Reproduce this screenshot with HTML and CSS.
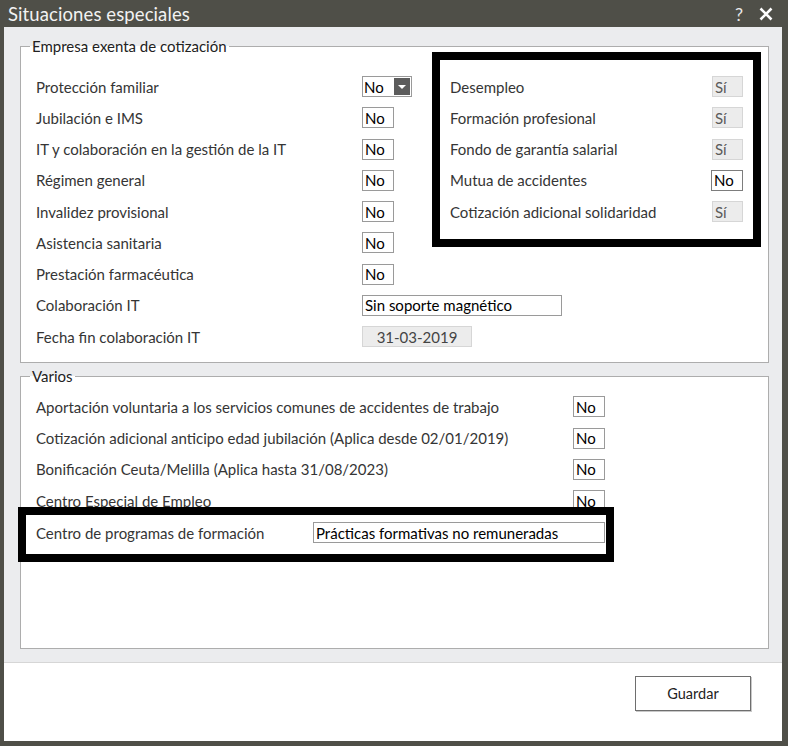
FILE: index.html
```html
<!DOCTYPE html>
<html lang="es">
<head>
  <meta charset="UTF-8" />
  <title>Situaciones especiales</title>
  <link rel="stylesheet" href="styles.css">
</head>
<body>
  <div class="window">
    <div class="titlebar">
      <span class="title">Situaciones especiales</span>
      <div class="title-buttons">
        <span class="help">?</span>
        <svg class="close" width="14" height="14" viewBox="0 0 14 14">
          <path d="M1.5 1.5L12.5 12.5M12.5 1.5L1.5 12.5" stroke="#fff" stroke-width="2.6" />
        </svg>
      </div>
    </div>

    <div class="dialog">
      <div class="panel">
        <fieldset class="group group-exenta">
          <legend>Empresa exenta de cotización</legend>
          <div class="cols">
            <div class="col-left">
              <div class="row">
                <label>Protección familiar</label>
                <div class="combo">
                  <span class="combo-value">No</span>
                  <span class="combo-arrow"></span>
                </div>
              </div>
              <div class="row"><label>Jubilación e IMS</label><input class="box" value="No" readonly /></div>
              <div class="row"><label>IT y colaboración en la gestión de la IT</label><input class="box" value="No" readonly /></div>
              <div class="row"><label>Régimen general</label><input class="box" value="No" readonly /></div>
              <div class="row"><label>Invalidez provisional</label><input class="box" value="No" readonly /></div>
              <div class="row"><label>Asistencia sanitaria</label><input class="box" value="No" readonly /></div>
              <div class="row"><label>Prestación farmacéutica</label><input class="box" value="No" readonly /></div>
              <div class="row"><label>Colaboración IT</label><input class="box wide" value="Sin soporte magnético" readonly /></div>
              <div class="row"><label>Fecha fin colaboración IT</label><input class="box date disabled" value="31-03-2019" readonly /></div>
            </div>

            <div class="col-right marked">
              <div class="row"><label>Desempleo</label><input class="box disabled" value="Sí" readonly /></div>
              <div class="row"><label>Formación profesional</label><input class="box disabled" value="Sí" readonly /></div>
              <div class="row"><label>Fondo de garantía salarial</label><input class="box disabled" value="Sí" readonly /></div>
              <div class="row"><label>Mutua de accidentes</label><input class="box dark" value="No" readonly /></div>
              <div class="row"><label>Cotización adicional solidaridad</label><input class="box disabled" value="Sí" readonly /></div>
            </div>
          </div>
        </fieldset>

        <fieldset class="group group-varios">
          <legend>Varios</legend>
          <div class="row"><label>Aportación voluntaria a los servicios comunes de accidentes de trabajo</label><input class="box" value="No" readonly /></div>
          <div class="row"><label>Cotización adicional anticipo edad jubilación (Aplica desde 02/01/2019)</label><input class="box" value="No" readonly /></div>
          <div class="row"><label>Bonificación Ceuta/Melilla (Aplica hasta 31/08/2023)</label><input class="box" value="No" readonly /></div>
          <div class="row"><label>Centro Especial de Empleo</label><input class="box" value="No" readonly /></div>
          <div class="row marked marked-row">
            <label>Centro de programas de formación</label>
            <input class="box long" value="Prácticas formativas no remuneradas" readonly />
          </div>
        </fieldset>
      </div>

      <div class="footer">
        <button class="btn">Guardar</button>
      </div>
    </div>
  </div>
</body>
</html>
```

FILE: styles.css
```css
body {
  margin: 0;
  background-color: #4f4f48;
  font-family: Lato, "Open Sans", sans-serif;
  font-size: 15px;
  color: #353535;
}
.window {
  width: 788px;
  height: 746px;
  display: flex;
  flex-direction: column;
}

/* title bar */
.titlebar {
  height: 27px;
  flex: 0 0 27px;
  display: flex;
  align-items: center;
  justify-content: space-between;
  padding: 0 15px 0 8px;
  color: #f2f2f2;
}
.title {
  font-size: 18.5px;
  letter-spacing: 0.1px;
}
.title-buttons {
  display: flex;
  align-items: center;
  gap: 16px;
}
.help {
  font-size: 18px;
  color: #e8e8e8;
}

/* dialog body */
.dialog {
  flex: 1;
  margin: 0 6px 5px 4px;
  background-color: #ebecee;
  display: flex;
  flex-direction: column;
}
.panel {
  flex: 1;
  display: flex;
  flex-direction: column;
  padding: 10px 13px 13px 16px;
}
.group {
  margin: 0;
  border: 1px solid #adadad;
  background-color: #fff;
  min-width: 0;
}
.group legend {
  margin-left: 9px;
  padding: 0 2px;
  line-height: 18px;
  color: #222;
}
.group-exenta {
  padding: 0 7px 0 0;
}
.group-varios {
  margin-top: 4px;
  padding: 6px 0 0 0;
  flex: 1;
}

.cols {
  display: flex;
  align-items: flex-start;
}
.col-left {
  flex: 0 0 411px;
  min-width: 0;
  box-sizing: border-box;
  padding: 16px 0 10px 15px;
}
.col-right {
  flex: 0 0 329px;
  box-sizing: border-box;
  margin: -3px 0 0 auto;
  padding: 11px 10px 12px 10px;
}
.col-right label {
  flex: 1;
}

/* black frame */
.marked {
  border: 8px solid #000;
  background-color: #fff;
}

.row {
  display: flex;
  align-items: center;
  height: 31.25px;
}
.col-left .row label {
  flex: 0 0 326px;
}
.group-varios .row {
  padding-left: 15px;
}
.group-varios .row label {
  flex: 0 0 537px;
}
.group-varios .marked-row {
  position: relative;
  width: 596px;
  height: 55px;
  box-sizing: border-box;
  margin: -9px 0 0 -3px;
  padding: 2px 0 6px 10px;
}
.group-varios .marked-row label {
  flex: 0 0 277px;
}

/* fields */
.box {
  flex-shrink: 0;
  box-sizing: border-box;
  width: 32px;
  height: 21px;
  margin: 0;
  padding: 0 2px;
  border: 1px solid #9a9a9a;
  background-color: #fff;
  font-family: inherit;
  font-size: 15px;
  color: #000;
  outline: none;
}
.box.wide {
  width: 200px;
}
.box.long {
  width: 292px;
}
.box.date {
  width: 110px;
  text-align: center;
}
.box.disabled {
  width: 31px;
  background-color: #ececec;
  border-color: #d6d6d6;
  color: #5a5a5a;
}
.box.date.disabled {
  width: 110px;
  color: #444;
}
.box.dark {
  border-color: #7d7d7d;
}

.combo {
  flex-shrink: 0;
  box-sizing: border-box;
  width: 50px;
  height: 21px;
  border: 1px solid #9a9a9a;
  display: flex;
  align-items: center;
  justify-content: space-between;
  padding: 0 1px 0 1px;
  color: #000;
}
.combo-arrow {
  width: 16px;
  height: 17px;
  background-color: #5c5c5c;
  display: flex;
  align-items: center;
  justify-content: center;
}
.combo-arrow::after {
  content: "";
  border-left: 4px solid transparent;
  border-right: 4px solid transparent;
  border-top: 4px solid #fff;
}

/* footer */
.footer {
  flex: 0 0 65px;
  border-top: 1px solid #d6d6d6;
  background-color: #fff;
  display: flex;
  justify-content: flex-end;
  align-items: flex-start;
  padding: 13px 31px 0 0;
}
.btn {
  width: 116px;
  height: 35px;
  border: 1px solid #6e6e6e;
  background-color: #fff;
  font-family: inherit;
  font-size: 14.5px;
  color: #222;
  box-shadow: 1px 1px 0 #c8c8c8;
}
```
